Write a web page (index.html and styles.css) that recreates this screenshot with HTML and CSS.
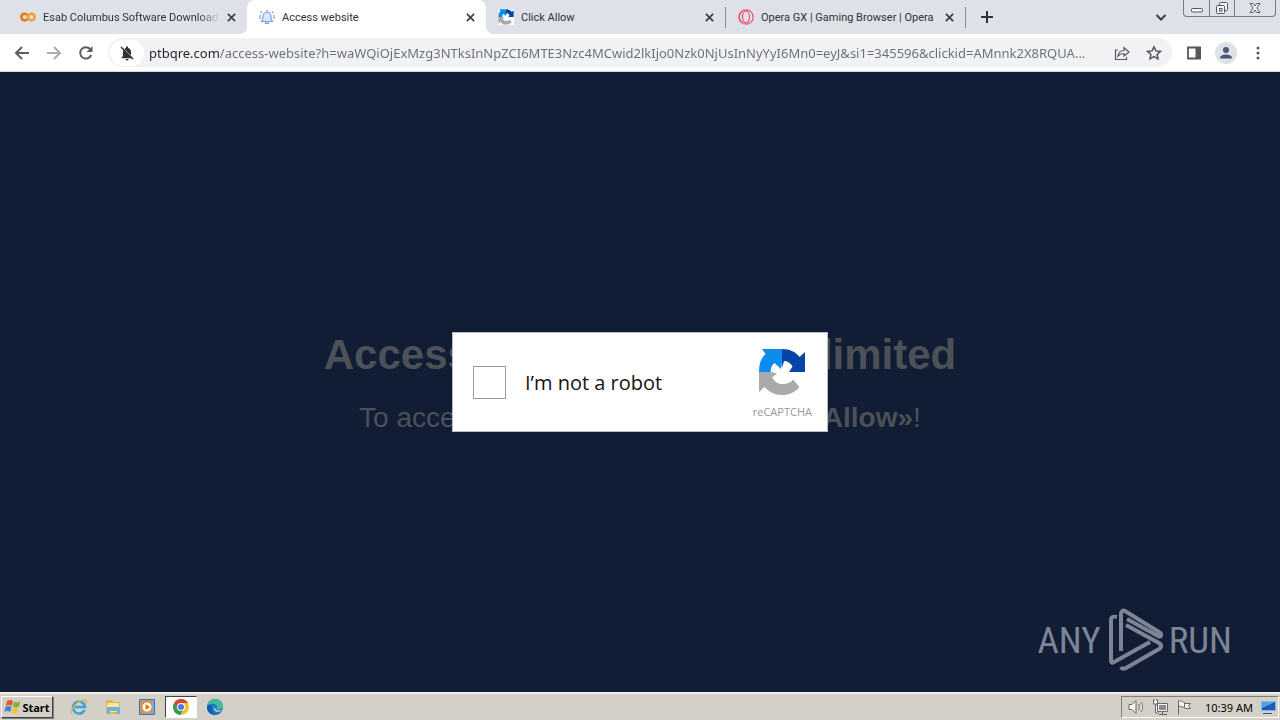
FILE: index.html
```html
<!DOCTYPE html>
<html lang="en">
<head>
<meta charset="utf-8">
<title>Access website</title>
<link rel="stylesheet" href="styles.css">
</head>
<body>
<header class="browser">
  <div class="strip">
    <div class="tabs">
      <div class="tab">
        <svg class="fav" viewBox="0 0 16 16" fill="none" stroke-width="2.4"><circle cx="4.6" cy="8" r="3.3" stroke="#f0a02c"/><circle cx="11.5" cy="8" r="3.3" stroke="#f0a02c"/><path d="M7 5.7a3.3 3.3 0 1 0 0 4.6" stroke="#e47a22"/></svg>
        <span class="title fade">Esab Columbus Software Download F</span>
        <button class="close" aria-label="Close tab"><svg viewBox="0 0 10 10"><path d="M1 1l8 8M9 1l-8 8"/></svg></button>
      </div>
      <div class="tab active">
        <svg class="fav" viewBox="0 0 16 16" fill="#dbe8fc" stroke="#7ba4ea" stroke-width="1.2"><path d="M2.500 12.500c1.500-1.500 1.500-2.500 1.500-5 0-2.500 1.500-4 4-4.500 2.500.5 4 2 4 4.500 0 2.500 0 3.500 1.500 5zM6.500 12.500v2h3v-2M8 3V1M1 6v4M15 6v4M3 2.500L1.500 4M13 2.500L14.500 4"/></svg>
        <span class="title">Access website</span>
        <button class="close" aria-label="Close tab"><svg viewBox="0 0 10 10"><path d="M1 1l8 8M9 1l-8 8"/></svg></button>
      </div>
      <div class="tab">
        <svg class="fav" viewBox="0 0 48 48"><path fill="#fff" d="M0 0h48v48H0z"/><use href="#captcha"/></svg>
        <span class="title">Click Allow</span>
        <button class="close" aria-label="Close tab"><svg viewBox="0 0 10 10"><path d="M1 1l8 8M9 1l-8 8"/></svg></button>
      </div>
      <div class="tab divided">
        <svg class="fav" viewBox="0 0 16 16" fill="none" stroke="#ec5578"><circle cx="8" cy="8" r="7.200" stroke-width="1.300"/><ellipse cx="8" cy="8" rx="3.500" ry="5.800" stroke-width="1.200"/><path d="M5 2.500a6 6 0 0 0 0 11" stroke-width="1"/></svg>
        <span class="title">Opera GX | Gaming Browser | Opera</span>
        <button class="close" aria-label="Close tab"><svg viewBox="0 0 10 10"><path d="M1 1l8 8M9 1l-8 8"/></svg></button>
      </div>
    </div>
    <button class="new-tab" aria-label="New tab"><svg viewBox="0 0 12 12"><path d="M6 0v12M0 6h12"/></svg></button>
    <button class="tab-search" aria-label="Search tabs"><svg viewBox="0 0 12 12"><path d="M1.500 4L6 8.500 10.500 4"/></svg></button>
    <div class="window-buttons">
      <button aria-label="Minimize"><svg viewBox="0 0 14 16"><rect x="1.500" y="8.500" width="11" height="3.500" rx="1"/></svg></button>
      <button aria-label="Restore"><svg viewBox="0 0 14 16"><rect x="4.500" y="2.500" width="8" height="8" rx="1"/><rect x="1.500" y="5.500" width="8" height="8" rx="1"/><rect x="4.500" y="8.500" width="2.500" height="2.500"/></svg></button>
      <button class="wide" aria-label="Close"><svg viewBox="0 0 14 16"><path d="M2 3.500h3.200L7 6l1.800-2.500H12L8.800 8 12 12.500H8.800L7 10l-1.800 2.500H2L5.200 8z"/></svg></button>
    </div>
  </div>
  <div class="toolbar">
    <button class="nav" aria-label="Back"><svg viewBox="0 0 16 16"><path d="M15 8H2M8 2L2 8l6 6"/></svg></button>
    <button class="nav dim" aria-label="Forward"><svg viewBox="0 0 16 16"><path d="M1 8h13M8 2l6 6-6 6"/></svg></button>
    <button class="nav" aria-label="Reload"><svg viewBox="0 0 16 16"><path d="M13.200 10a5.700 5.700 0 1 1-1-5.900"/><path d="M14.500 1v6h-6z" fill="#5b5e62" stroke="none"/></svg></button>
    <div class="omnibox">
      <button class="site" aria-label="Notifications blocked"><svg viewBox="0 0 16 16"><path fill="#303236" d="M4 7c0-2 1-3.500 3-4V1.500h2V3c2 .5 3 2 3 4v4l1.500 1.500v.8h-11v-.8L4 11zM6.500 14h3a1.500 1.500 0 0 1-3 0z"/><path d="M3 2l12 12" stroke="#fff" stroke-width="1"/><path d="M2 2l12 12" stroke="#303236" stroke-width="1.500"/></svg></button>
      <input class="url" type="text" aria-label="Address" value="ptbqre.com/access-website?h=waWQiOjExMzg3NTksInNpZCI6MTE3Nzc4MCwid2lkIjo0Nzk0NjUsInNyYyI6Mn0=eyJ&amp;si1=345596&amp;clickid=AMnnk2X8RQUA...">
      <button class="tool" aria-label="Share"><svg viewBox="0 0 16 16" stroke-width="1.200"><path d="M4 5H1.500v9.500h11V12M4 11c.5-3.500 2.500-5.500 6-5.500V2.500L15 7l-5 4V8.500c-3 0-4.500.8-6 2.500z"/></svg></button>
      <button class="tool" aria-label="Bookmark"><svg viewBox="0 0 16 16" stroke-width="1.500"><path d="M8 1.800l1.900 4.100 4.500.5-3.300 3 .9 4.400L8 11.600l-4 2.200.9-4.400-3.300-3 4.500-.5z"/></svg></button>
    </div>
    <button class="tool" aria-label="Side panel"><svg viewBox="0 0 16 16"><path stroke-width="1.800" d="M2 2.500h12v11H2z"/><path d="M9.500 2H15v12H9.500z" fill="#54575c" stroke="none"/></svg></button>
    <button class="tool avatar" aria-label="Profile"><svg viewBox="0 0 16 16"><circle cx="8" cy="5" r="3"/><path d="M2 13.500c0-3 3-4 6-4s6 1 6 4z"/></svg></button>
    <button class="tool" aria-label="Menu"><svg viewBox="0 0 16 16"><g fill="#54575c" stroke="none"><circle cx="8" cy="3" r="1.500"/><circle cx="8" cy="8" r="1.500"/><circle cx="8" cy="13" r="1.500"/></g></svg></button>
  </div>
</header>

<main class="page">
  <div class="message">
    <h1>Access to the website is limited</h1>
    <p>To access this website, first click on <b>«Allow»</b>!</p>
  </div>
  <div class="captcha">
    <input type="checkbox" id="robot">
    <label for="robot">I’m not a robot</label>
    <div class="brand">
      <svg viewBox="0 0 48 48"><g id="captcha"><path fill="#0b8cee" d="M4 1h20v13l-1 7-6.500-6C13.500 17 13 20 12.500 24H1C1 16 3 10 7.500 6z"/><path fill="#0844a8" d="M24 1c8 0 14 3 17.500 8L47 4v20H31l3.500-5.500C33 15 29 13 26 13l-2 7z"/><path fill="#aaa" d="M1 24h12l6 1.500-5 4c3 5 7 7 12 6.500 4.500-.5 7.500-2 9-4.500L41.500 39C37 44.500 31 47 24 47c-7 0-13-3-17.500-8L1 44z"/></g></svg>
      <span>reCAPTCHA</span>
    </div>
  </div>
  <div class="watermark">
    <span>ANY</span>
    <svg viewBox="0 0 56 64"><path d="M10 9C6 8 4 9 4 12v41c0 2 1 2 3 1l36-20M14 43V6c0-3 2-4 4-3l34 21c4 2 2 6-1 4L20 11M19 17l33 18c3 2 3 4 0 6L19 60c-2 1-4 1-5-1"/></svg>
    <span>RUN</span>
  </div>
</main>

<footer class="taskbar">
  <button class="start"><svg viewBox="0 0 18 16"><path fill="#e9572b" d="M3 2c2-1.500 4-1.500 6 0L7.800 7c-2-1.300-4-1.300-6 0z"/><path fill="#78b83a" d="M10 2.600c2 1.300 4 1.300 6.500 0L15 7.600c-2 1.300-4 1.300-6 0z"/><path fill="#3c86dc" d="M1.500 8c2-1.300 4-1.300 6 0L6.200 13c-2-1.300-4-1.300-6 0z"/><path fill="#f8c52c" d="M8.600 8.600c2 1.300 4 1.300 6 0l-1.300 5c-2 1.300-4 1.300-6 0z"/></svg>Start</button>
  <div class="quick">
    <button aria-label="Internet Explorer"><svg viewBox="0 0 18 18" fill="none"><path d="M14.500 12a6 6 0 1 1 .5-3H5" stroke="#38a3e3" stroke-width="2.600"/><path d="M2 16C-1 13 7 2 15 2c2 0 2 2 1 4" stroke="#e7b634" stroke-width="1.300"/></svg></button>
    <button aria-label="Explorer"><svg viewBox="0 0 18 18"><path fill="#dfb94c" d="M2 2h6l1 2h7v12H2z"/><path fill="#f9e89b" d="M3 5h12v9H3z"/><path fill="#6cb2df" d="M3 9h13v7h-3v-3H6v3H3z"/></svg></button>
    <button aria-label="Media Player"><svg viewBox="0 0 18 18"><path fill="#75aee0" stroke="#3e75ad" d="M1.500 1.500h15v15h-15z"/><path fill="#f18b20" d="M3 3h11v12H3z"/><circle cx="9" cy="9" r="4.500" fill="#fff"/><path fill="#e46e0d" d="M7.500 6l4.500 3-4.500 3z"/></svg></button>
    <button class="pressed" aria-label="Chrome"><svg viewBox="0 0 18 18"><circle cx="9" cy="9" r="8" fill="#f6c32c"/><path fill="#dc4437" d="M2.100 5A8 8 0 0 1 16 5H9L5.500 11z"/><path fill="#2b9b55" d="M2.100 5a8 8 0 0 0 6 12l4-6.500H5.500z"/><circle cx="9" cy="9" r="4" fill="#fff"/><circle cx="9" cy="9" r="3" fill="#3e7be8"/></svg></button>
    <button aria-label="Edge"><svg viewBox="0 0 18 18"><circle cx="9" cy="9" r="8" fill="#1679c9"/><path fill="#43bd9b" d="M1.500 7C3 0 14-1 16.800 7c.8 4-3 5-6 4 2-4-3-7-9.300-4z"/><path fill="#125bac" d="M6 8c-2 5 2 10 7 8-6 2-12 0-12-7 1-2 3-2 5-1z"/><path fill="#d4d0c8" d="M9 8.500c-1 3 3 5 7.500 3.500-2 2-7 3-8.500-.5 0-1.500.5-2.500 1-3z"/></svg></button>
  </div>
  <div class="tray">
    <svg viewBox="0 0 18 18"><path d="M2 6.500h3l4-4v13l-4-4H2zM11.500 6c1 2 1 4 0 6M14 4c2 3 2 7 0 10"/></svg>
    <svg viewBox="0 0 18 18"><path d="M6.500 5.500h10v8h-10zM8 16.500h8M11.500 14v2M2.500 2v4h4V2M4.500 6v9H8M3 1v2M6 1v2"/><path d="M8 7h7v5H8z" fill="#8c8c8c" stroke="none"/></svg>
    <svg viewBox="0 0 18 18"><path d="M3.500 16.500v-14M3.500 3.500c3-2 4 1 6 1v5c-2 0-3-2-6-1M9.500 5.500h6l-2 2.500 2 2.500h-6"/></svg>
    <time>10:39 AM</time>
    <svg viewBox="0 0 18 18"><path fill="#1d5bb5" stroke="#7fb6e8" d="M2.500 3.500h14v9h-14z"/><path fill="#5ba0e4" stroke="none" d="M3 4h13L3 10z"/><path stroke="#345480" d="M4 15.500h9"/></svg>
  </div>
</footer>
</body>
</html>
```
FILE: styles.css
```css
* { box-sizing: border-box; }
body {
  margin: 0;
  min-height: 100vh;
  display: flex;
  flex-direction: column;
  font-family: "Noto Sans", sans-serif;
  font-size: 11px;
  color: #303338;
}
button { margin: 0; padding: 0; border: 0; background: none; font: inherit; color: inherit; display: flex; align-items: center; justify-content: center; flex: none; }
svg { display: block; flex: none; }

.strip { display: flex; height: 34px; background: #dee1e7; padding: 0 4px 0 8px; }
.tabs { display: flex; flex: 0 1 958px; min-width: 0; font-family: Roboto, sans-serif; }
.tab { position: relative; display: flex; align-items: center; flex: 1 1 0; min-width: 0; padding: 0 9px 0 12px; }
.tab.active { background: #fff; border-radius: 8px 8px 0 0; }
.tab.active::before, .tab.active::after { content: ""; position: absolute; bottom: 0; width: 8px; height: 8px; }
.tab.active::before { right: 100%; background: radial-gradient(circle at 0 0, transparent 8px, #fff 8px); }
.tab.active::after { left: 100%; background: radial-gradient(circle at 100% 0, transparent 8px, #fff 8px); }
.tab.divided { border-left: 1px solid #8a8d93; border-right: 1px solid #8a8d93; border-image: linear-gradient(transparent 8px, #8a8d93 8px, #8a8d93 27px, transparent 27px) 1; }
.fav { width: 16px; height: 16px; }
.title { flex: 1; margin-left: 7px; white-space: nowrap; overflow: hidden; }
.fade { -webkit-mask-image: linear-gradient(to right, #000 88%, transparent); mask-image: linear-gradient(to right, #000 88%, transparent); }
.close { width: 14px; height: 14px; margin-left: 4px; }
.close svg { width: 9px; height: 9px; stroke: #3f4248; stroke-width: 2; }
.new-tab { width: 42px; }
.new-tab svg { width: 12px; height: 12px; stroke: #303338; stroke-width: 2; }
.tab-search { width: 44px; margin-left: auto; }
.tab-search svg { width: 12px; height: 12px; fill: none; stroke: #3b3e44; stroke-width: 2; }
.window-buttons { display: flex; height: 17px; border: 1px solid #777b84; border-top: 0; border-radius: 0 0 4px 4px; }
.window-buttons button { width: 25px; }
.window-buttons button + button { border-left: 1px solid #777b84; }
.window-buttons .wide { width: 41px; }
.window-buttons svg { width: 14px; height: 16px; fill: #f4f5f7; stroke: #555962; }

.toolbar { display: flex; align-items: center; height: 38px; padding: 0 6px; border-bottom: 1px solid #d5d9df; background: #fff; }
.nav { width: 32px; height: 32px; }
.nav svg { width: 16px; height: 16px; fill: none; stroke: #5b5e62; stroke-width: 2; }
.dim { opacity: .5; }
.omnibox { display: flex; align-items: center; flex: 1; min-width: 0; height: 29px; margin: 0 6px; padding: 0 2px; border-radius: 15px; background: #f0f2f4; }
.site { width: 34px; height: 26px; border-radius: 13px; background: #fff; }
.site svg { width: 16px; height: 16px; }
.url {
  flex: 1; min-width: 0; height: 24px; margin: 0 0 0 5px; padding: 0; border: 0; outline: 0;
  font: 13px "Noto Sans", sans-serif;
  color: transparent;
  background: linear-gradient(to right, #202327 71px, #696e74 71px);
  -webkit-background-clip: text; background-clip: text;
}
.tool { width: 32px; height: 32px; }
.tool svg { width: 16px; height: 16px; fill: none; stroke: #54575c; }
.avatar svg { width: 22px; height: 22px; padding: 3px; border-radius: 50%; background: #dde1e8; fill: #4a5578; stroke: none; }

.page { position: relative; flex: 1; display: grid; place-items: center; background: #101d35; font-family: "Liberation Sans", Arial, sans-serif; }
.message, .captcha { grid-area: 1 / 1; }
.message { text-align: center; color: #4c5157; }
.message h1 { margin: 0 0 23px; font-size: 42px; line-height: 48px; }
.message p { margin: 0; font-size: 28px; line-height: 32px; }
.captcha { z-index: 1; display: flex; align-items: center; width: 376px; height: 100px; padding: 0 15px 0 20px; border: 1px solid #b8bcc4; background: #fff; font-family: "Open Sans", "Noto Sans", sans-serif; }
.captcha input { appearance: none; width: 33px; height: 33px; margin: 0 19px 0 0; border: 1px solid #999; background: #fff; }
.captcha label { font-size: 20px; color: #151515; }
.brand { display: flex; flex-direction: column; align-items: center; gap: 8px; margin-left: auto; padding-top: 3px; font-size: 11px; line-height: 16px; color: #999; }
.brand svg { width: 48px; height: 48px; }
.watermark { position: absolute; right: 48px; bottom: 20px; display: flex; align-items: center; gap: 6px; color: #7d8594; font: 37px "Roboto Condensed", "Liberation Sans Narrow", sans-serif; }
.watermark svg { width: 56px; height: 64px; fill: none; stroke: #7d8594; stroke-width: 4; }

.taskbar { display: flex; align-items: center; height: 28px; padding: 2px 1px; border-top: 2px solid #f1efeb; background: #d4d0c8; color: #000; }
.start { height: 22px; width: 52px; gap: 0; border: 1px solid; border-color: #fff #404040 #404040 #fff; box-shadow: 1px 1px #808080; font-weight: bold; }
.start svg { width: 18px; height: 16px; }
.quick { display: flex; margin-left: 9px; }
.quick button { width: 34px; height: 22px; }
.quick svg { width: 18px; height: 18px; }
.quick .pressed { width: 32px; margin: 0 1px; background: #fff; border: 1px solid; border-color: #404040 #fff #fff #404040; }
.tray { display: flex; align-items: center; gap: 6px; height: 22px; margin-left: auto; padding: 0 1px 0 5px; border: 1px solid; border-color: #808080 #fff #fff #808080; }
.tray svg { width: 18px; height: 18px; fill: #f5f5f2; stroke: #686868; }
.tray time { margin-left: 6px; }
```
